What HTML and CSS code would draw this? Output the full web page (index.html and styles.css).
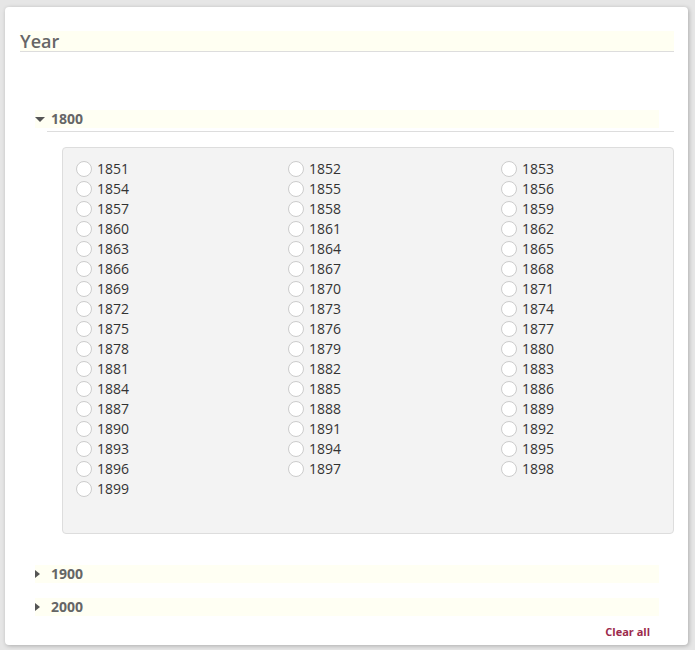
FILE: index.html
```html
<!DOCTYPE html>
<html>
<head>
<meta charset="utf-8">
<link rel="stylesheet" href="styles.css">
</head>
<body>
<div class="card">
  <div class="facet-title">Year</div>
  <div class="groups">
    <div class="group open">
      <div class="group-head"><span class="tri-down"></span><span class="group-label">1800</span></div>
      <div class="group-rule"></div>
      <div class="options">
        <label class="opt"><span class="radio"></span>1851</label>
        <label class="opt"><span class="radio"></span>1852</label>
        <label class="opt"><span class="radio"></span>1853</label>
        <label class="opt"><span class="radio"></span>1854</label>
        <label class="opt"><span class="radio"></span>1855</label>
        <label class="opt"><span class="radio"></span>1856</label>
        <label class="opt"><span class="radio"></span>1857</label>
        <label class="opt"><span class="radio"></span>1858</label>
        <label class="opt"><span class="radio"></span>1859</label>
        <label class="opt"><span class="radio"></span>1860</label>
        <label class="opt"><span class="radio"></span>1861</label>
        <label class="opt"><span class="radio"></span>1862</label>
        <label class="opt"><span class="radio"></span>1863</label>
        <label class="opt"><span class="radio"></span>1864</label>
        <label class="opt"><span class="radio"></span>1865</label>
        <label class="opt"><span class="radio"></span>1866</label>
        <label class="opt"><span class="radio"></span>1867</label>
        <label class="opt"><span class="radio"></span>1868</label>
        <label class="opt"><span class="radio"></span>1869</label>
        <label class="opt"><span class="radio"></span>1870</label>
        <label class="opt"><span class="radio"></span>1871</label>
        <label class="opt"><span class="radio"></span>1872</label>
        <label class="opt"><span class="radio"></span>1873</label>
        <label class="opt"><span class="radio"></span>1874</label>
        <label class="opt"><span class="radio"></span>1875</label>
        <label class="opt"><span class="radio"></span>1876</label>
        <label class="opt"><span class="radio"></span>1877</label>
        <label class="opt"><span class="radio"></span>1878</label>
        <label class="opt"><span class="radio"></span>1879</label>
        <label class="opt"><span class="radio"></span>1880</label>
        <label class="opt"><span class="radio"></span>1881</label>
        <label class="opt"><span class="radio"></span>1882</label>
        <label class="opt"><span class="radio"></span>1883</label>
        <label class="opt"><span class="radio"></span>1884</label>
        <label class="opt"><span class="radio"></span>1885</label>
        <label class="opt"><span class="radio"></span>1886</label>
        <label class="opt"><span class="radio"></span>1887</label>
        <label class="opt"><span class="radio"></span>1888</label>
        <label class="opt"><span class="radio"></span>1889</label>
        <label class="opt"><span class="radio"></span>1890</label>
        <label class="opt"><span class="radio"></span>1891</label>
        <label class="opt"><span class="radio"></span>1892</label>
        <label class="opt"><span class="radio"></span>1893</label>
        <label class="opt"><span class="radio"></span>1894</label>
        <label class="opt"><span class="radio"></span>1895</label>
        <label class="opt"><span class="radio"></span>1896</label>
        <label class="opt"><span class="radio"></span>1897</label>
        <label class="opt"><span class="radio"></span>1898</label>
        <label class="opt"><span class="radio"></span>1899</label>
      </div>
    </div>
    <div class="group closed first-closed">
      <div class="group-head"><span class="tri-right"></span><span class="group-label">1900</span></div>
    </div>
    <div class="group closed">
      <div class="group-head"><span class="tri-right"></span><span class="group-label">2000</span></div>
    </div>
  </div>
  <div class="footer"><a class="clear-all">Clear all</a></div>
</div>
</body>
</html>
```
FILE: styles.css
```css
html, body {
  margin: 0;
  padding: 0;
}
body {
  background: #e6e6e6;
  font-family: "Open Sans", "Liberation Sans", sans-serif;
  padding: 7px 7px 5px 5px;
  height: 650px;
  box-sizing: border-box;
}
.card {
  background: #fff;
  border-radius: 4px;
  box-shadow: 1px 1px 4px rgba(0,0,0,0.25);
  height: 638px;
  box-sizing: border-box;
  padding: 24px 14px 0 15px;
  display: flex;
  flex-direction: column;
}
.facet-title {
  font-size: 18px;
  font-weight: 600;
  color: #666;
  line-height: 20px;
  height: 20px;
  background: #fffff2;
  border-bottom: 1px solid #ddd;
}
.groups {
  margin-top: 58px;
  padding-left: 15px;
  display: flex;
  flex-direction: column;
}
.group-head {
  height: 18px;
  margin-right: 15px;
  background: #fffff3;
  display: flex;
  align-items: center;
  color: #666;
}
.group-label {
  font-size: 14px;
  font-weight: 700;
  line-height: 18px;
  margin-left: 6px;
}
.tri-down {
  width: 0;
  height: 0;
  border-left: 5px solid transparent;
  border-right: 5px solid transparent;
  border-top: 5px solid #555;
}
.tri-right {
  width: 0;
  height: 0;
  border-top: 4px solid transparent;
  border-bottom: 4px solid transparent;
  border-left: 5px solid #555;
  margin-right: 5px;
}
.group-rule {
  margin-top: 3px;
  margin-left: 12px;
  border-top: 1px solid #ddd;
}
.options {
  margin-top: 15px;
  margin-left: 27px;
  height: 387px;
  box-sizing: border-box;
  background: #f3f3f3;
  border: 1px solid #ddd;
  border-radius: 4px;
  padding: 11px 0 0 13px;
  display: grid;
  grid-template-columns: 212px 213px 160px;
  grid-auto-rows: 20px;
  align-content: start;
  overflow: hidden;
}
.opt {
  display: flex;
  align-items: center;
  font-size: 14px;
  color: #333;
  line-height: 20px;
}
.radio {
  width: 14px;
  height: 14px;
  border: 1px solid #ccc;
  border-radius: 50%;
  background: #fff;
  margin-right: 5px;
}
.first-closed {
  margin-top: 31px;
}
.closed + .closed {
  margin-top: 15px;
}
.footer {
  display: flex;
  justify-content: flex-end;
  padding-right: 24px;
  margin-top: 9px;
}
.clear-all {
  font-size: 11px;
  font-weight: 700;
  color: #9c2a4b;
  line-height: 14px;
}
```
